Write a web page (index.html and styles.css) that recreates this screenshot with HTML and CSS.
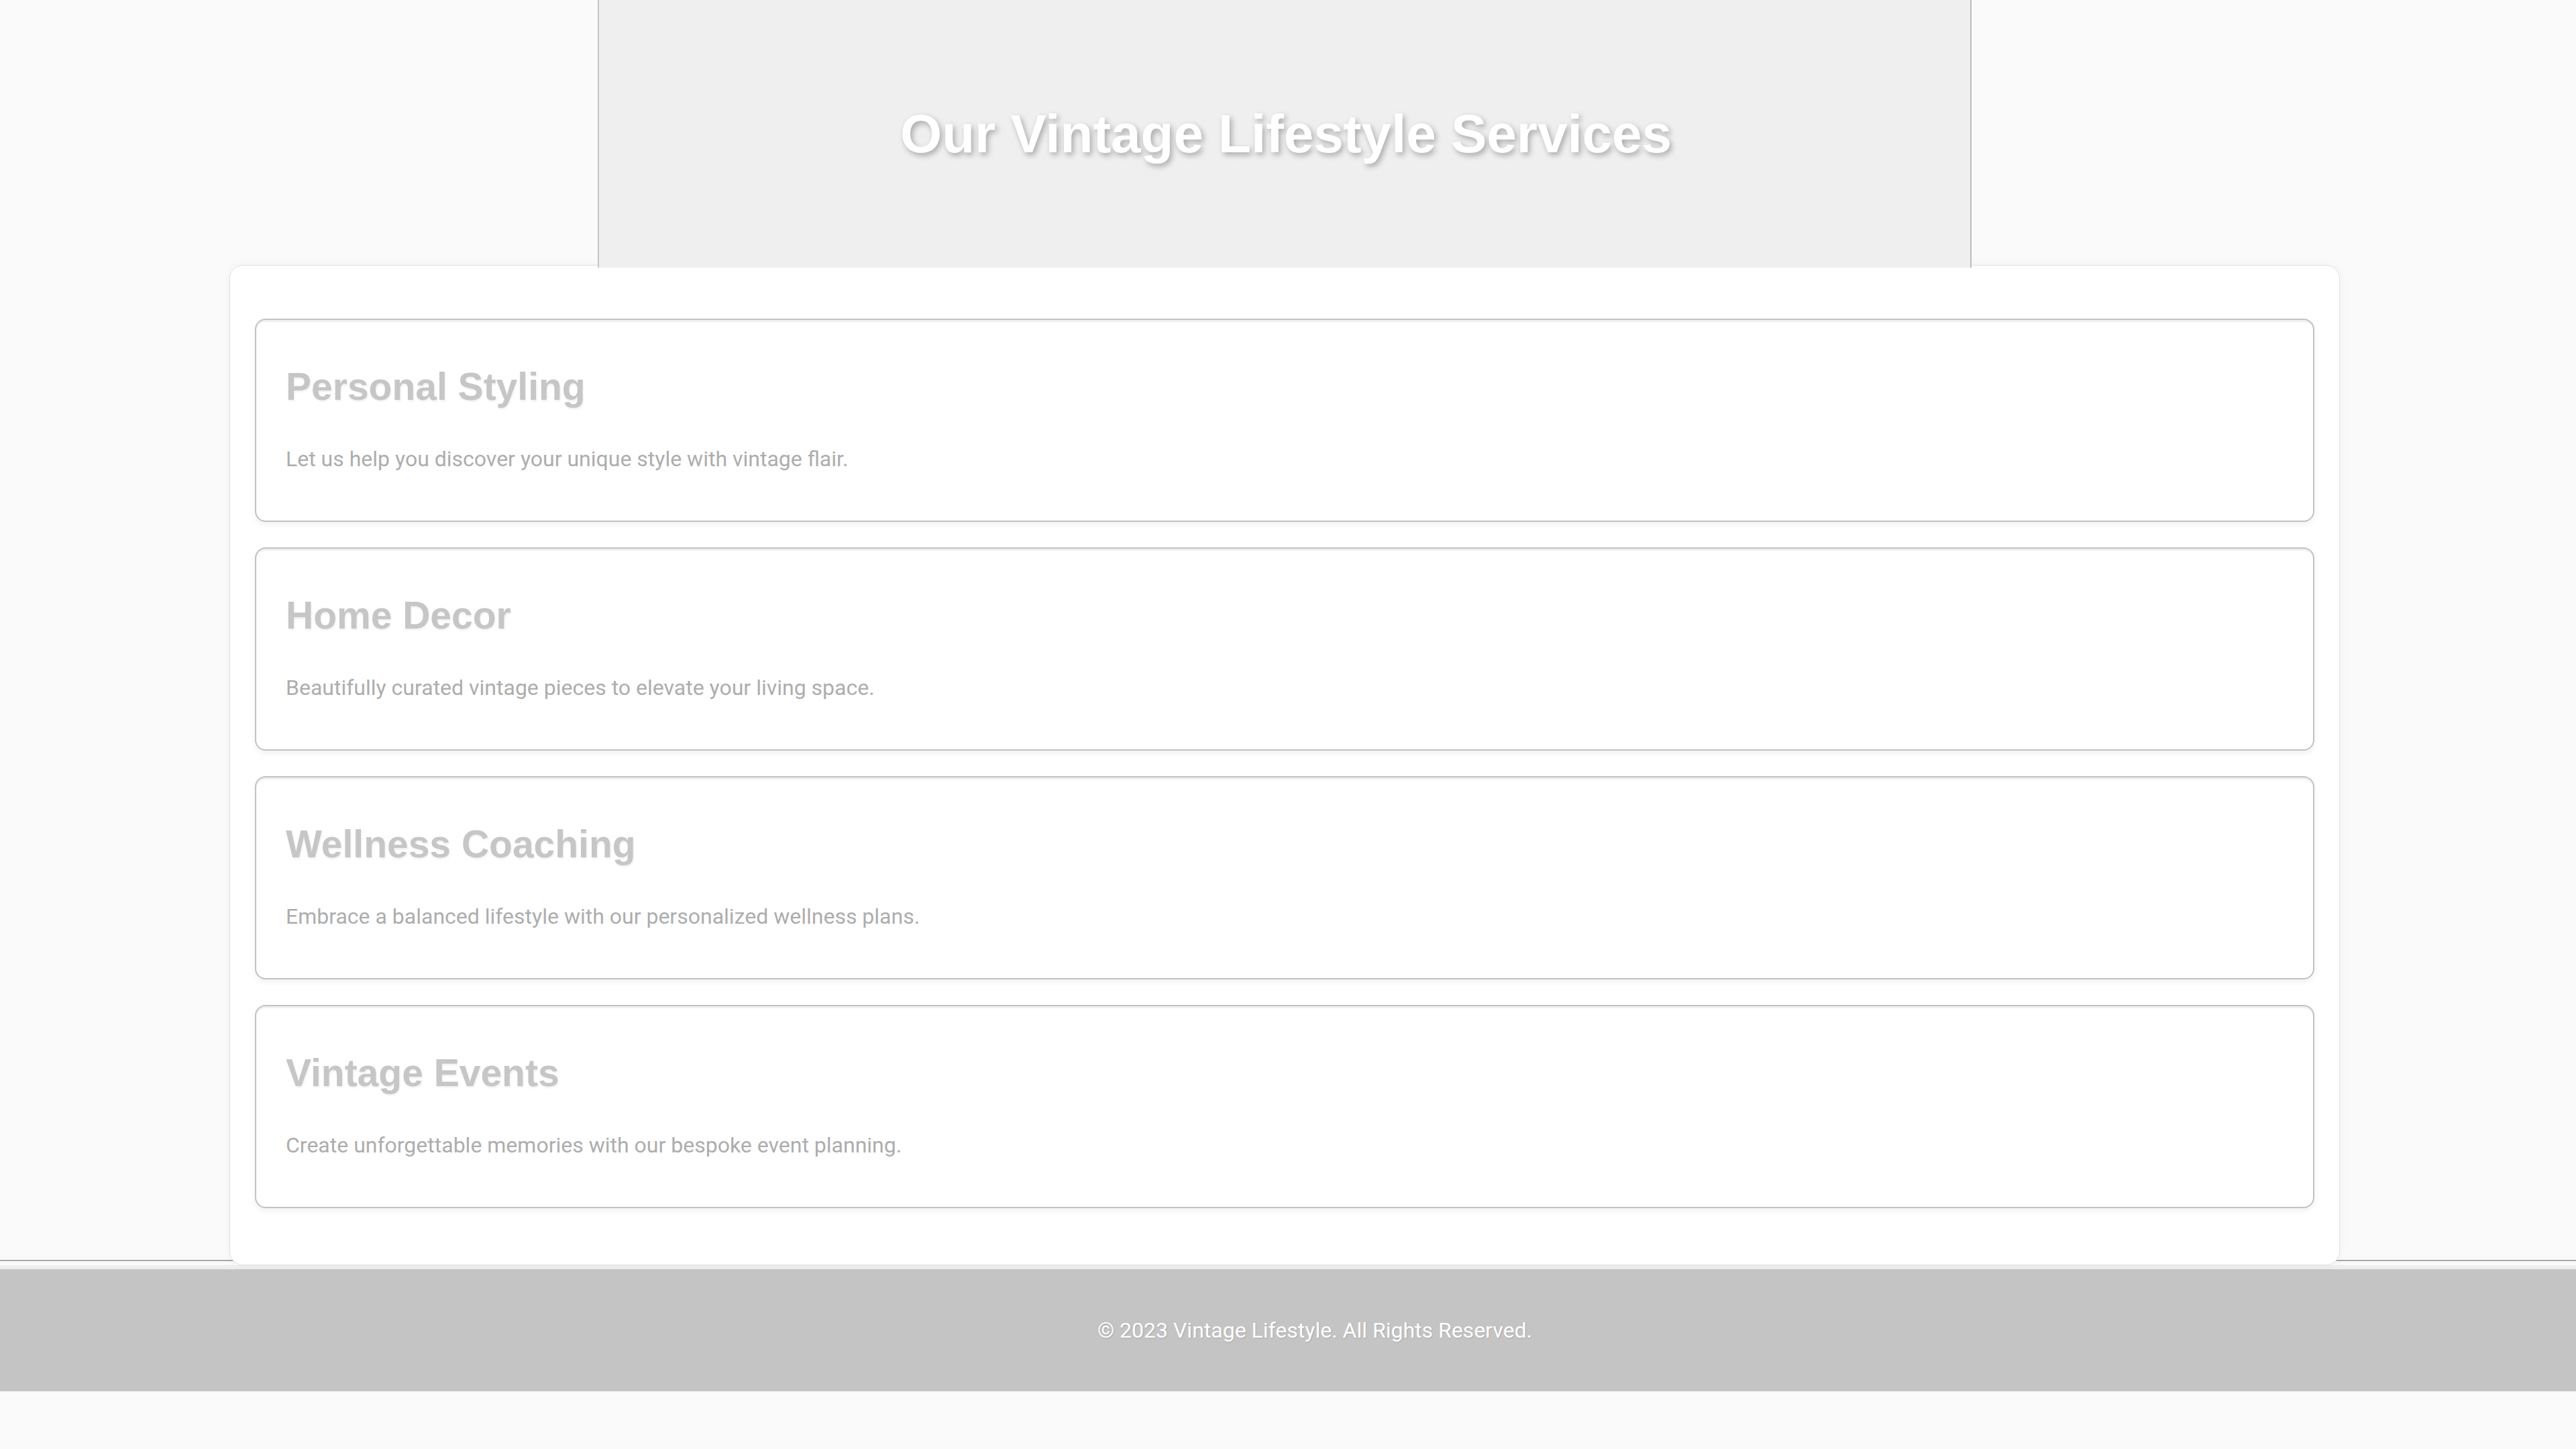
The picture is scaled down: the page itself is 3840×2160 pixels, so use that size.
FILE: index.html
```html
<!DOCTYPE html>
<html lang="en">
<head>
<meta charset="utf-8">
<title>Vintage Lifestyle Services</title>
<link rel="stylesheet" href="styles.css">
</head>
<body>
<div class="page">
  <header class="hero">
    <h1 class="hero-title">Our Vintage Lifestyle Services</h1>
  </header>
  <main class="services">
    <section class="card">
      <h3 class="card-title">Personal Styling</h3>
      <p class="card-text">Let us help you discover your unique style with vintage flair.</p>
    </section>
    <section class="card">
      <h3 class="card-title">Home Decor</h3>
      <p class="card-text">Beautifully curated vintage pieces to elevate your living space.</p>
    </section>
    <section class="card">
      <h3 class="card-title">Wellness Coaching</h3>
      <p class="card-text">Embrace a balanced lifestyle with our personalized wellness plans.</p>
    </section>
    <section class="card">
      <h3 class="card-title">Vintage Events</h3>
      <p class="card-text">Create unforgettable memories with our bespoke event planning.</p>
    </section>
  </main>
</div>
<footer class="site-footer">
  <p class="footer-text">© 2023 Vintage Lifestyle. All Rights Reserved.</p>
</footer>
</body>
</html>
```
FILE: styles.css
```css
* {
  box-sizing: border-box;
}

body {
  margin: 0;
  background: #fafafa;
  font-family: Roboto, "Liberation Sans", Arial, sans-serif;
}

.page {
  padding-right: 10px;
  border-bottom: 2px solid #a8a8a8;
}

.hero {
  position: relative;
  z-index: 2;
  width: 2048px;
  height: 399px;
  margin: 0 auto;
  background: #efefef;
  border-left: 2px solid #c6c6c6;
  border-right: 2px solid #bdbdbd;
  display: flex;
  align-items: center;
  justify-content: center;
}

.hero-title {
  margin: 0 0 0 4px;
  font-family: "Liberation Sans", Arial, sans-serif;
  font-weight: 700;
  font-size: 80px;
  line-height: 92px;
  color: #ffffff;
  text-shadow: 3px 4px 8px rgba(0, 0, 0, 0.3);
}

.services {
  position: relative;
  z-index: 1;
  width: 3146px;
  margin: -4px auto -8px;
  background: #ffffff;
  border: 1px solid #e0e0e0;
  border-radius: 20px;
  box-shadow: 0 0 14px rgba(0, 0, 0, 0.04);
  padding: 79px 37px 84px;
  display: flex;
  flex-direction: column;
  gap: 38px;
}

.card {
  height: 303px;
  background: #ffffff;
  border: 2px solid #c2c2c2;
  border-radius: 16px;
  box-shadow: 0 4px 8px rgba(0, 0, 0, 0.06), inset 0 3px 0 #f0f0f0;
  padding: 66px 44px 0;
}

.card-title {
  margin: 0;
  font-family: "Liberation Sans", Arial, sans-serif;
  font-weight: 700;
  font-size: 57px;
  line-height: 66px;
  color: #c6c6c6;
  text-shadow: 1px 2px 3px rgba(0, 0, 0, 0.07);
}

.card-text {
  margin: 51px 0 0;
  font-family: Roboto, "Liberation Sans", Arial, sans-serif;
  font-size: 32px;
  line-height: 48px;
  color: #adadad;
}

.site-footer {
  margin-top: 6px;
  height: 188px;
  background: #c4c4c4;
  border-top: 6px solid #eeeeee;
  padding-left: 80px;
  display: flex;
  align-items: center;
  justify-content: center;
}

.footer-text {
  margin: 0;
  font-family: Roboto, "Liberation Sans", Arial, sans-serif;
  font-size: 32px;
  line-height: 48px;
  color: #ffffff;
  text-shadow: 1px 1px 2px rgba(0, 0, 0, 0.14);
}
```
